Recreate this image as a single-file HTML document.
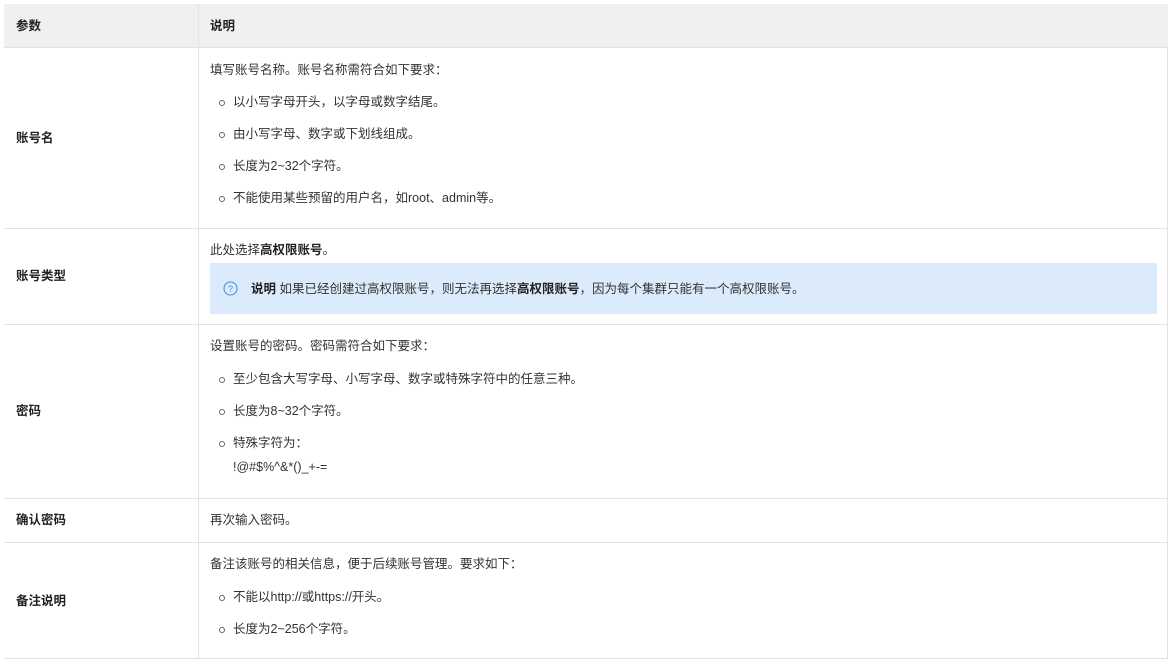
<!DOCTYPE html>
<html><head><meta charset="utf-8"><style>
body{margin:0;width:1172px;height:664px;background:#fff;font-family:"Liberation Sans","Noto Sans CJK SC",sans-serif;font-size:12.5px;color:#333;position:relative;overflow:hidden}
.a{position:absolute;white-space:nowrap;line-height:16px}
.l{position:absolute;background:#e3e3e3}
.b{font-weight:bold;color:#222}
.d{position:absolute;width:4px;height:4px;border:1px solid #666;border-radius:50%}
</style></head><body>
<div style="position:absolute;left:4px;top:4px;width:1164px;height:43px;background:#f0f0f0"></div>
<div class="l" style="left:4px;top:47px;width:1164px;height:1px"></div>
<div class="l" style="left:4px;top:228px;width:1164px;height:1px"></div>
<div class="l" style="left:4px;top:324px;width:1164px;height:1px"></div>
<div class="l" style="left:4px;top:498px;width:1164px;height:1px"></div>
<div class="l" style="left:4px;top:542px;width:1164px;height:1px"></div>
<div class="l" style="left:4px;top:658px;width:1164px;height:1px"></div>
<div class="l" style="left:198px;top:4px;width:1px;height:654px"></div>
<div class="l" style="left:1167px;top:47px;width:1px;height:611px"></div>

<div class="a b" style="left:16px;top:18px">参数</div>
<div class="a b" style="left:210px;top:18px">说明</div>

<div class="a b" style="left:16px;top:130px">账号名</div>
<div class="a" style="left:210px;top:62px">填写账号名称。账号名称需符合如下要求：</div>
<div class="d" style="left:219px;top:100px"></div><div class="a" style="left:233px;top:94px">以小写字母开头，以字母或数字结尾。</div>
<div class="d" style="left:219px;top:132px"></div><div class="a" style="left:233px;top:126px">由小写字母、数字或下划线组成。</div>
<div class="d" style="left:219px;top:164px"></div><div class="a" style="left:233px;top:158px">长度为2~32个字符。</div>
<div class="d" style="left:219px;top:196px"></div><div class="a" style="left:233px;top:190px">不能使用某些预留的用户名，如root、admin等。</div>

<div class="a b" style="left:16px;top:268px">账号类型</div>
<div class="a" style="left:210px;top:242px">此处选择<span class="b">高权限账号</span>。</div>
<div style="position:absolute;left:210px;top:263px;width:947px;height:51px;background:#dcebfb"></div>
<svg style="position:absolute;left:223px;top:281px" width="15" height="15" viewBox="0 0 15 15"><circle cx="7.5" cy="7.5" r="6.5" fill="none" stroke="#3d8fe6" stroke-width="1"/><text x="7.5" y="11" font-size="9" text-anchor="middle" fill="#3d8fe6" font-family="Liberation Sans">?</text></svg>
<div class="a" style="left:251px;top:281px"><span class="b">说明</span> 如果已经创建过高权限账号，则无法再选择<span class="b">高权限账号</span>，因为每个集群只能有一个高权限账号。</div>

<div class="a b" style="left:16px;top:403px">密码</div>
<div class="a" style="left:210px;top:338px">设置账号的密码。密码需符合如下要求：</div>
<div class="d" style="left:219px;top:377px"></div><div class="a" style="left:233px;top:371px">至少包含大写字母、小写字母、数字或特殊字符中的任意三种。</div>
<div class="d" style="left:219px;top:409px"></div><div class="a" style="left:233px;top:403px">长度为8~32个字符。</div>
<div class="d" style="left:219px;top:441px"></div><div class="a" style="left:233px;top:435px">特殊字符为：</div>
<div class="a" style="left:233px;top:459px">!@#$%^&amp;*()_+-=</div>

<div class="a b" style="left:16px;top:512px">确认密码</div>
<div class="a" style="left:210px;top:512px">再次输入密码。</div>

<div class="a b" style="left:16px;top:593px">备注说明</div>
<div class="a" style="left:210px;top:556px">备注该账号的相关信息，便于后续账号管理。要求如下：</div>
<div class="d" style="left:219px;top:595px"></div><div class="a" style="left:233px;top:589px">不能以http://或https://开头。</div>
<div class="d" style="left:219px;top:627px"></div><div class="a" style="left:233px;top:621px">长度为2~256个字符。</div>
</body></html>
